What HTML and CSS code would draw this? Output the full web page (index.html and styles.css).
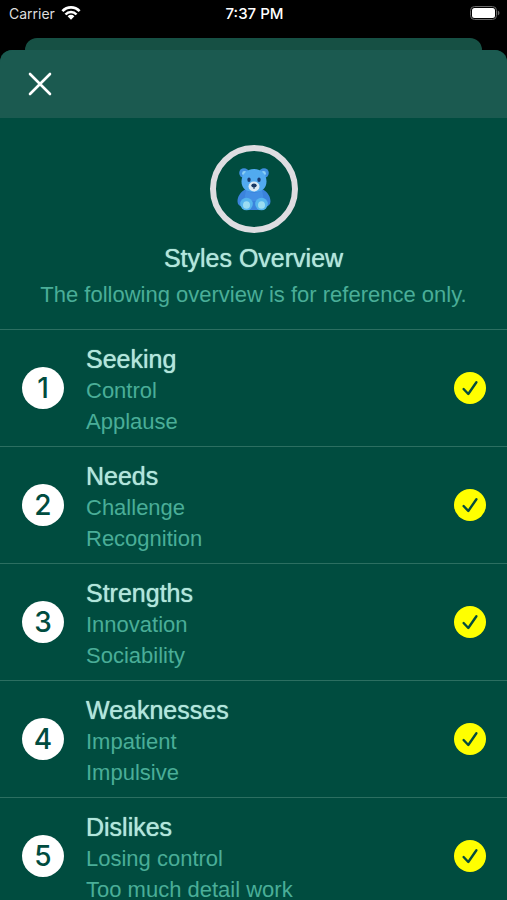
FILE: index.html
```html
<!DOCTYPE html>
<html lang="en">
<head>
<meta charset="utf-8">
<meta name="viewport" content="width=device-width, initial-scale=1">
<title>Styles Overview</title>
<link rel="stylesheet" href="styles.css">
</head>
<body>
<svg class="defs" aria-hidden="true">
  <symbol id="check" viewBox="0 0 32 32"><circle cx="16" cy="16" r="16" fill="#ffff00"/><path d="M9.6 17 14.3 22 22.4 10.2" fill="none" stroke="#044c3e" stroke-width="2.4" stroke-linecap="round" stroke-linejoin="round"/></symbol>
</svg>
<div class="screen">
  <div class="status">
    <div class="carrier">
      <span>Carrier</span>
      <svg width="20" height="16" viewBox="0 0 20 16" aria-hidden="true">
        <g fill="none" stroke="#fff" stroke-width="2.6">
          <path d="M1.4 6.1C6.2 1.1 13.8 1.1 18.6 6.1"/>
          <path d="M4.5 9.5C7.5 6.2 12.5 6.2 15.5 9.5"/>
        </g>
        <path d="M6.6 11.2C8.6 9.4 11.4 9.4 13.4 11.2L10 14.8Z" fill="#fff"/>
      </svg>
    </div>
    <span class="time">7:37 PM</span>
    <svg class="battery" width="31" height="16" viewBox="0 0 31 16" aria-hidden="true">
      <rect x="1.500" y="1.500" width="26" height="13" rx="4" fill="none" stroke="#6b6b6b"/>
      <rect x="3" y="3" width="23" height="10" rx="2.5" fill="#fff"/>
      <path d="M28.800 5.600Q30.500 6.300 30.500 8T28.800 10.400Z" fill="#6b6b6b"/>
    </svg>
  </div>
  <div class="back-sheet"></div>
  <main class="sheet">
    <div class="bar">
      <button class="close" aria-label="Close">
        <svg width="24" height="24" viewBox="0 0 24 24" aria-hidden="true"><path d="M2 2 22 22M22 2 2 22" stroke="#fff" stroke-width="2.6" stroke-linecap="round"/></svg>
      </button>
    </div>
    <header class="intro">
      <div class="avatar">
        <svg width="34" height="44" viewBox="0 0 34 44" role="img" aria-label="Teddy bear">
          <circle cx="7" cy="6" r="4.8" fill="#3f8fe0"/><circle cx="27" cy="6" r="4.8" fill="#3f8fe0"/>
          <circle cx="7.5" cy="6.5" r="2.4" fill="#8bd0f5"/><circle cx="26.5" cy="6.5" r="2.4" fill="#8bd0f5"/>
          <path d="M9 22C3 25 .5 30 .5 34.5C.5 37.5 2.5 39 5 39.5L8 43H26L29 39.5C31.500 39 33.500 37.500 33.500 34.500C33.500 30 31 25 25 22Z" fill="#3b83dc"/>
          <path d="M9 23Q17 29 25 23L27 34H7Z" fill="#438fe5"/>
          <path d="M17 2C9.500 2 4.500 7.500 4.500 14.500C4.500 21.500 9.500 25 17 25S29.500 21.500 29.500 14.500C29.500 7.500 24.500 2 17 2Z" fill="#51aaf0"/>
          <ellipse cx="17" cy="19.500" rx="5.500" ry="5" fill="#d9e9f3"/>
          <ellipse cx="17" cy="18.500" rx="2.700" ry="2" fill="#173763"/><path d="M17 19V22" stroke="#173763"/>
          <ellipse cx="12" cy="12.800" rx="1.700" ry="2.200" fill="#173b73"/><ellipse cx="22" cy="12.800" rx="1.700" ry="2.200" fill="#173b73"/>
          <circle cx="9.500" cy="37" r="6.300" fill="#55b5ee"/><circle cx="24.500" cy="37" r="6.300" fill="#55b5ee"/>
          <ellipse cx="9.500" cy="38" rx="3.500" ry="3.800" fill="#9adcf2"/><ellipse cx="24.500" cy="38" rx="3.500" ry="3.800" fill="#9adcf2"/>
        </svg>
      </div>
      <h1>Styles Overview</h1>
      <p>The following overview is for reference only.</p>
    </header>
    <ol class="list">
      <li><span class="num">1</span><div class="text"><h2>Seeking</h2><p>Control</p><p>Applause</p></div><svg class="check" role="img" aria-label="Done"><use href="#check"/></svg></li>
      <li><span class="num">2</span><div class="text"><h2>Needs</h2><p>Challenge</p><p>Recognition</p></div><svg class="check" role="img" aria-label="Done"><use href="#check"/></svg></li>
      <li><span class="num">3</span><div class="text"><h2>Strengths</h2><p>Innovation</p><p>Sociability</p></div><svg class="check" role="img" aria-label="Done"><use href="#check"/></svg></li>
      <li><span class="num">4</span><div class="text"><h2>Weaknesses</h2><p>Impatient</p><p>Impulsive</p></div><svg class="check" role="img" aria-label="Done"><use href="#check"/></svg></li>
      <li><span class="num">5</span><div class="text"><h2>Dislikes</h2><p>Losing control</p><p>Too much detail work</p></div><svg class="check" role="img" aria-label="Done"><use href="#check"/></svg></li>
    </ol>
  </main>
</div>
</body>
</html>
```
FILE: styles.css
```css
* { box-sizing: border-box; }
body, h1, h2, p, ol { margin: 0; padding: 0; }
body {
  background: #000;
  color: #4aae98;
  font-family: "Liberation Sans", Arial, sans-serif;
  font-size: 22px;
  line-height: 31px;
}
.defs { position: absolute; width: 0; height: 0; }
.screen {
  display: flex;
  flex-direction: column;
  height: 100vh;
  overflow: hidden;
}
.status {
  flex: none;
  display: grid;
  grid-template-columns: 1fr auto 1fr;
  align-items: center;
  height: 28px;
  margin-bottom: 10px;
  padding: 0 7px 0 9px;
  color: #fff;
  font: 14px/28px Inter, sans-serif;
}
.carrier { display: flex; align-items: center; gap: 6px; color: #ddd; }
.carrier svg { margin-bottom: 2px; }
.time { font-size: 15px; font-weight: 500; }
.battery { justify-self: end; margin-bottom: 2px; }
.back-sheet {
  flex: none;
  height: 12px;
  margin: 0 25px;
  border-radius: 12px 12px 0 0;
  background: #165044;
}
.sheet {
  flex: 1;
  min-height: 0;
  overflow: hidden;
  border-radius: 12px 12px 0 0;
  background: #004c3f;
}
.bar {
  display: flex;
  align-items: center;
  height: 68px;
  padding: 0 22px;
  background: #1b5a50;
}
.close {
  display: flex;
  padding: 6px;
  border: 0;
  background: none;
}
.intro {
  display: flex;
  flex-direction: column;
  align-items: center;
  padding: 27px 16px 19px;
  text-align: center;
}
.avatar {
  display: flex;
  align-items: center;
  justify-content: center;
  width: 88px;
  height: 88px;
  margin-bottom: 9px;
  border: 6px solid #dedde1;
  border-radius: 50%;
}
h1, h2 {
  color: #b2e6dc;
  font-size: 25px;
  font-weight: 400;
  line-height: 32px;
  text-shadow: 0 0 1px #b2e6dc;
}
.intro h1 { margin-bottom: 5px; }
.list { list-style: none; }
.list li {
  display: flex;
  align-items: center;
  gap: 22px;
  padding: 9px 21px 9px 22px;
  border-top: 1px solid #2c6f61;
}
.num {
  flex: none;
  width: 42px;
  border-radius: 50%;
  background: #fff;
  color: #004c3f;
  font: 500 28px/42px Inter, sans-serif;
  text-align: center;
}
.text { flex: 1; padding-top: 4px; }
.check { flex: none; width: 32px; height: 32px; }
```
